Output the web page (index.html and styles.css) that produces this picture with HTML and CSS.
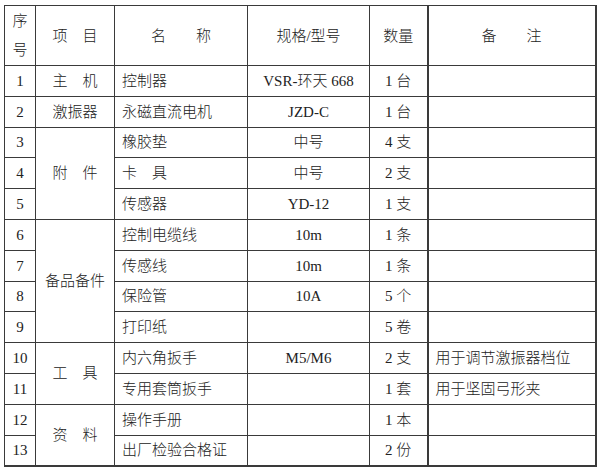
FILE: index.html
```html
<!DOCTYPE html>
<html lang="zh-CN">
<head>
<meta charset="utf-8">
<link rel="stylesheet" href="styles.css">
</head>
<body>
<table class="list">
  <colgroup>
    <col class="c1"><col class="c2"><col class="c3"><col class="c4"><col class="c5"><col class="c6">
  </colgroup>
  <tr class="head">
    <td class="ctr seq">序<br>号</td>
    <td class="ctr">项　目</td>
    <td class="ctr">名　　称</td>
    <td class="ctr">规格/型号</td>
    <td class="ctr">数量</td>
    <td class="ctr note">备　　注</td>
  </tr>
  <tr><td class="ctr">1</td><td class="ctr">主　机</td><td>控制器</td><td class="ctr">VSR-环天 668</td><td class="ctr">1 台</td><td class="note"></td></tr>
  <tr><td class="ctr">2</td><td class="ctr">激振器</td><td>永磁直流电机</td><td class="ctr">JZD-C</td><td class="ctr">1 台</td><td class="note"></td></tr>
  <tr><td class="ctr">3</td><td class="ctr" rowspan="3">附　件</td><td>橡胶垫</td><td class="ctr">中号</td><td class="ctr">4 支</td><td class="note"></td></tr>
  <tr><td class="ctr">4</td><td>卡　具</td><td class="ctr">中号</td><td class="ctr">2 支</td><td class="note"></td></tr>
  <tr><td class="ctr">5</td><td>传感器</td><td class="ctr">YD-12</td><td class="ctr">1 支</td><td class="note"></td></tr>
  <tr><td class="ctr">6</td><td class="ctr" rowspan="4">备品备件</td><td>控制电缆线</td><td class="ctr">10m</td><td class="ctr">1 条</td><td class="note"></td></tr>
  <tr><td class="ctr">7</td><td>传感线</td><td class="ctr">10m</td><td class="ctr">1 条</td><td class="note"></td></tr>
  <tr><td class="ctr">8</td><td>保险管</td><td class="ctr">10A</td><td class="ctr">5 个</td><td class="note"></td></tr>
  <tr><td class="ctr">9</td><td>打印纸</td><td class="ctr"></td><td class="ctr">5 卷</td><td class="note"></td></tr>
  <tr><td class="ctr">10</td><td class="ctr" rowspan="2">工　具</td><td>内六角扳手</td><td class="ctr">M5/M6</td><td class="ctr">2 支</td><td class="note">用于调节激振器档位</td></tr>
  <tr><td class="ctr">11</td><td>专用套筒扳手</td><td class="ctr"></td><td class="ctr">1 套</td><td class="note">用于坚固弓形夹</td></tr>
  <tr><td class="ctr">12</td><td class="ctr" rowspan="2">资　料</td><td>操作手册</td><td class="ctr"></td><td class="ctr">1 本</td><td class="note"></td></tr>
  <tr class="last"><td class="ctr">13</td><td>出厂检验合格证</td><td class="ctr"></td><td class="ctr">2 份</td><td class="note"></td></tr>
</table>
</body>
</html>
```
FILE: styles.css
```css
html, body {
  margin: 0;
  padding: 0;
  background: #ffffff;
}
body {
  padding: 5px 0 0 4px;
  font-family: "Liberation Serif", "Noto Sans CJK SC", serif;
  font-weight: 300;
  font-size: 15px;
  color: #222222;
}
.list {
  border-collapse: collapse;
  table-layout: fixed;
  width: 591px;
  border-right: 2px solid #3a3a3a;
  border-bottom: 2px solid #3a3a3a;
}
.c1 { width: 31px; }
.c2 { width: 79px; }
.c3 { width: 133px; }
.c4 { width: 122px; }
.c5 { width: 58px; }
.c6 { width: 168px; }
.list td {
  border: 1px solid #3a3a3a;
  padding: 0 0 0 7px;
  height: 29.8px;
  line-height: 20px;
  vertical-align: middle;
  white-space: nowrap;
  text-align: left;
}
.list td.ctr {
  text-align: center;
  padding: 0;
}
.list td.note {
  border-left: 2px solid #3a3a3a;
}
.list .head td {
  height: 59px;
  line-height: 24px;
}
.list .head td.seq {
  line-height: 29px;
}
```
